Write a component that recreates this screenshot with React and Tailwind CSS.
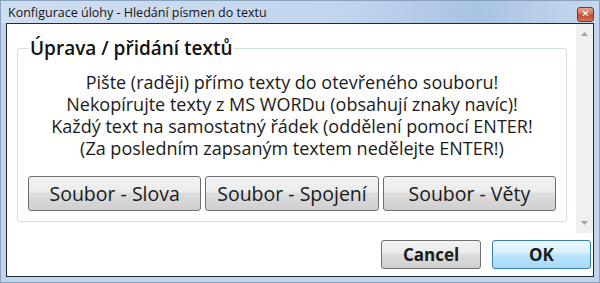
import React from "react";

const font = { fontFamily: "'Open Sans', 'Noto Sans', sans-serif" };

const lines = [
  "Pište (raději) přímo texty do otevřeného souboru!",
  "Nekopírujte texty z MS WORDu (obsahují znaky navíc)!",
  "Každý text na samostatný řádek (oddělení pomocí ENTER!",
  "(Za posledním zapsaným textem nedělejte ENTER!)",
];

function WinButton({ children, primary, className = "" }) {
  return (
    <button
      className={
        "rounded-[3px] border text-[#1b1b1b] " +
        (primary
          ? "border-[#3c7fb1] bg-[linear-gradient(#eaf6fd_0%,#d9f0fc_45%,#bee6fd_50%,#a7d9f5_100%)] "
          : "border-[#707070] bg-[linear-gradient(#f2f2f2_0%,#ebebeb_45%,#dddddd_50%,#cfcfcf_100%)] ") +
        className
      }
    >
      {children}
    </button>
  );
}

function Arrow({ up }) {
  return (
    <svg width="7" height="4" viewBox="0 0 7 4">
      <path d={up ? "M0 4 L3.5 0 L7 4 Z" : "M0 0 L3.5 4 L7 0 Z"} fill="#a3a3a3" />
    </svg>
  );
}

export default function App() {
  return (
    <div
      className="w-[600px] h-[283px] flex flex-col bg-[#c1d5ed] border border-[#8aa2bd]"
      style={font}
    >
      {/* title bar */}
      <div className="h-[22px] flex items-center justify-between pl-[7px] pr-[5px] bg-[linear-gradient(90deg,#cfdef1_0%,#c3d6ee_55%,#a9c3e3_80%,#c6d8ee_100%)]">
        <span className="text-[12.5px] text-[#151515] leading-none pt-[3px]">
          Konfigurace úlohy - Hledání písmen do textu
        </span>
        <div className="mt-[4px] w-[17px] h-[15px] rounded-[3px] border border-[#7d3427] bg-[linear-gradient(#e8a493_0%,#d27058_45%,#c24a30_55%,#d3735a_100%)] flex items-center justify-center">
          <span className="text-white text-[10px] font-bold leading-none" style={{ fontFamily: "'DejaVu Sans', sans-serif" }}>
            ✕
          </span>
        </div>
      </div>

      {/* client area */}
      <div className="flex-1 mx-[5px] mb-[5px] border border-[#1e2a35] bg-white flex flex-col">
        {/* scroll viewer */}
        <div className="h-[209px] flex">
          <div className="flex-1 pl-[10px] pr-[9px] pt-[11px]">
            <fieldset className="border border-[#d5dfe5] rounded-[3px] px-[10px] pb-[10px]">
              <legend className="ml-[1px] px-[1px] text-[19px] font-semibold leading-[26px] text-[#111]">
                Úprava / přidání textů
              </legend>
              <div className="pt-[10px] flex flex-col items-center text-[18px] leading-[22px] text-[#1a1a1a]">
                {lines.map((l) => (
                  <span key={l}>{l}</span>
                ))}
              </div>
              <div className="mt-[17px] grid grid-cols-3 gap-[4px]">
                <WinButton className="h-[35px] text-[19.5px]">Soubor - Slova</WinButton>
                <WinButton className="h-[35px] text-[19.5px]">Soubor - Spojení</WinButton>
                <WinButton className="h-[35px] text-[19.5px]">Soubor - Věty</WinButton>
              </div>
            </fieldset>
          </div>
          {/* disabled vertical scrollbar */}
          <div className="w-[17px] bg-[#f0f0f0] flex flex-col items-center justify-between py-[8px]">
            <Arrow up />
            <Arrow />
          </div>
        </div>

        {/* dialog buttons */}
        <div className="flex-1 flex justify-end items-start gap-[11px] pt-[7px] pr-[2px]">
          <WinButton className="w-[100px] h-[29px] text-[17px] font-bold leading-none">Cancel</WinButton>
          <WinButton primary className="w-[99px] h-[29px] text-[17px] font-bold leading-none">
            OK
          </WinButton>
        </div>
      </div>
    </div>
  );
}
